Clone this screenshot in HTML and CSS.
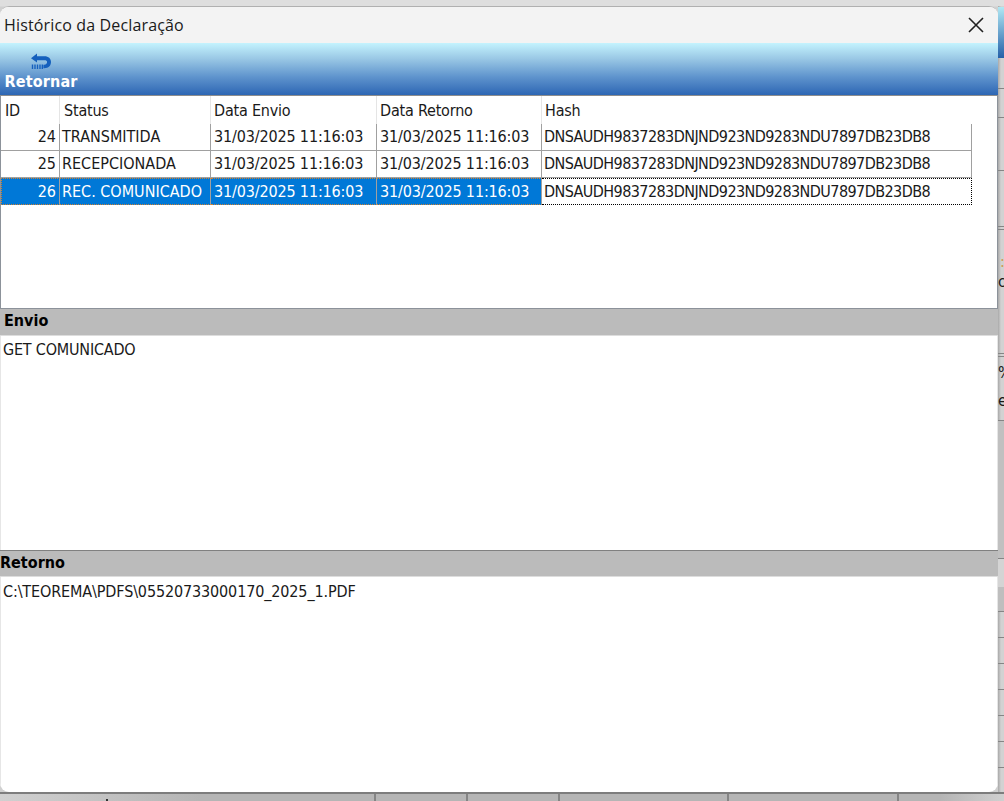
FILE: index.html
```
<!DOCTYPE html>
<html lang="pt-BR">
<head>
    <meta charset="UTF-8">
    <meta name="viewport" content="width=device-width, initial-scale=1.0">
    <title>Histórico da Declaração</title>
    <link rel="stylesheet" href="styles.css">
</head>
<body>
    <div class="desktop">
        <div class="window">
            <div class="titlebar">
                <span class="title">Histórico da Declaração</span>
                <svg class="close" width="16" height="16" viewBox="0 0 16 16">
                    <path d="M1 1L15 15M15 1L1 15" stroke="#222" stroke-width="1.6" fill="none"/>
                </svg>
            </div>

            <div class="toolbar">
                <div class="tool-button">
                    <svg width="22" height="18" viewBox="0 0 22 18">
                        <path d="M1 5.2L7 .6V3.2H14.5C18.5 3.2 21 5.4 21 9C21 12.8 18.4 15.2 14.5 15.2H13.4V11.7H14.2C16.2 11.7 17.1 10.6 17.1 9.1C17.1 7.7 16.2 7.2 14.2 7.2H7V9.6Z" fill="#1560bd"/>
                        <path d="M2.5 11.5V16M5 11.5V16M7.5 11.5V16M10 11.5V16M12.3 11.5V16" stroke="#1560bd" stroke-width="1.4"/>
                    </svg>
                    <span class="tool-label">Retornar</span>
                </div>
            </div>

            <div class="grid">
                <table>
                    <colgroup>
                        <col class="col-id"><col class="col-status"><col class="col-date"><col class="col-date-ret"><col class="col-hash">
                    </colgroup>
                    <tr>
                        <th>ID</th>
                        <th>Status</th>
                        <th>Data Envio</th>
                        <th>Data Retorno</th>
                        <th>Hash</th>
                    </tr>
                    <tr>
                        <td class="id">24</td>
                        <td>TRANSMITIDA</td>
                        <td class="date">31/03/2025 11:16:03</td>
                        <td class="date">31/03/2025 11:16:03</td>
                        <td class="hash">DNSAUDH9837283DNJND923ND9283NDU7897DB23DB8</td>
                    </tr>
                    <tr>
                        <td class="id">25</td>
                        <td>RECEPCIONADA</td>
                        <td class="date">31/03/2025 11:16:03</td>
                        <td class="date">31/03/2025 11:16:03</td>
                        <td class="hash">DNSAUDH9837283DNJND923ND9283NDU7897DB23DB8</td>
                    </tr>
                    <tr class="selected">
                        <td class="id">26</td>
                        <td>REC. COMUNICADO</td>
                        <td class="date">31/03/2025 11:16:03</td>
                        <td class="date">31/03/2025 11:16:03</td>
                        <td class="hash">DNSAUDH9837283DNJND923ND9283NDU7897DB23DB8</td>
                    </tr>
                </table>
            </div>

            <div class="section-title envio">Envio</div>
            <div class="memo memo-envio">GET COMUNICADO</div>
            <div class="section-title retorno">Retorno</div>
            <div class="memo memo-retorno">C:\TEOREMA\PDFS\05520733000170_2025_1.PDF</div>
        </div>

        <!-- parent form, visible behind the dialog -->
        <div class="behind-right">
            <div class="b-toolbar"></div>
            <div class="b-cell h31"></div>
            <div class="b-cell h29"></div>
            <div class="b-cell h53"></div>
            <div class="b-cell h56"></div>
            <div class="b-cell h3"></div>
            <div class="b-cell b-text h124"><span class="colon">:</span><span>c</span></div>
            <div class="b-cell h3"></div>
            <div class="b-cell b-values h64"><span>%</span><span>e</span></div>
            <div class="b-cell dark h138"></div>
            <div class="b-cell split h53"></div>
            <div class="b-cell h26"></div>
            <div class="b-cell h26"></div>
            <div class="b-cell h26"></div>
            <div class="b-cell h26"></div>
            <div class="b-cell h26"></div>
            <div class="b-cell h26"></div>
        </div>
        <div class="behind-bottom">
            <div class="f-cell f1"><span class="speck"></span></div>
            <div class="f-cell f2"></div>
            <div class="f-cell f2"></div>
            <div class="f-cell f3"></div>
            <div class="f-cell f4"></div>
        </div>
    </div>
</body>
</html>
```
FILE: styles.css
```
* {
    box-sizing: border-box;
}
body {
    margin: 0;
    font-family: "DejaVu Sans Condensed", "DejaVu Sans", sans-serif;
    font-stretch: condensed;
    font-size: 16px;
    color: #1a1a1a;
    overflow: hidden;
}
.desktop {
    display: grid;
    grid-template-columns: 998px 6px;
    grid-template-rows: 786px 9px;
    width: 1004px;
    height: 801px;
    padding-top: 6px;
    background: linear-gradient(#dedede 0, #dedede 6px, #d0d0d0 7px, #d0d0d0 100%);
}
.window {
    display: flex;
    flex-direction: column;
    border-top: 1px solid #b0b0b0;
    border-radius: 9px;
    background-color: #fff;
    overflow: hidden;
    white-space: nowrap;
}
.titlebar {
    display: flex;
    justify-content: space-between;
    align-items: center;
    height: 36px;
    padding: 0 14px 0 4px;
    background-color: #f3f3f3;
}
.title {
    font-family: "Open Sans", "Noto Sans", sans-serif;
    font-stretch: normal;
    font-size: 16px;
    letter-spacing: 0.15px;
}
.close {
    margin-bottom: 1px;
}
.toolbar {
    height: 52px;
    padding: 10px 4px 0;
    background: linear-gradient(#c4f3fe, #9ac8e5 30%, #5f94cd 65%, #2d66b4);
}
.tool-button {
    display: flex;
    flex-direction: column;
    align-items: center;
    width: 74px;
}
.tool-label {
    font-size: 16px;
    font-weight: bold;
    line-height: 22px;
    letter-spacing: 0.15px;
    color: #fff;
}
.grid {
    height: 214px;
    border: 1px solid #8c929a;
    border-top-color: #8d8d8d;
}
table {
    table-layout: fixed;
    width: 971px;
    border-collapse: separate;
    border-spacing: 0;
}
.col-id { width: 59px; }
.col-status { width: 151px; }
.col-date { width: 166px; }
.col-date-ret { width: 165px; }
.col-hash { width: 430px; }
th, td {
    padding: 0 0 0 2px;
    line-height: 20px;
    text-align: left;
    font-weight: normal;
    border-right: 1px solid #a0a0a0;
}
th {
    height: 28px;
    padding: 1px 0 0 4px;
    letter-spacing: -0.2px;
    border-right-color: #e5e5e5;
}
th:nth-child(n+3) {
    padding-left: 3px;
}
th:last-child {
    border-right-color: transparent;
}
td {
    height: 27px;
    border-bottom: 1px solid #a0a0a0;
}
.id {
    padding: 0 3px 0 0;
    text-align: right;
}
.date {
    padding-left: 3px;
    letter-spacing: -0.15px;
}
.hash { letter-spacing: -0.57px; }
.selected td {
    color: #fff;
    background-color: #0078d7;
    border-top: 1px dotted #d08030;
    border-bottom: 1px dotted #d08030;
}
.selected .id {
    border-left: 1px dotted #d08030;
}
.selected .hash {
    color: #1a1a1a;
    background-color: #fff;
    border: 1px dotted #000;
    border-left: 0;
}
.section-title {
    height: 27px;
    padding-left: 4px;
    line-height: 23px;
    font-weight: bold;
    color: #000;
    background-color: #bbb;
    border-bottom: 1px solid #ddd;
}
.retorno {
    padding-left: 0;
    border-top: 1px solid #808080;
}
.memo {
    height: 214px;
    padding: 5px 2px;
    line-height: 20px;
    border-left: 1px solid #e6e6e6;
    border-right: 1px solid #e6e6e6;
}
.memo-envio {
    padding-top: 4px;
    letter-spacing: -0.2px;
}
.memo-retorno { letter-spacing: -0.13px; }

.behind-right {
    display: flex;
    flex-direction: column;
    padding-top: 1px;
    overflow: hidden;
    background: linear-gradient(90deg, #a9a9a9, #d2d2d2 3px);
}
.behind-right > div {
    flex: none;
}
.b-toolbar {
    height: 51px;
    background: linear-gradient(#b0e8f4, #2560a8);
}
.b-cell {
    border-bottom: 1px solid #858585;
}
.dark {
    background-color: #c0c0c0;
}
.split {
    background: linear-gradient(#d4d4d4 28px, #bebebe 28px);
}
.h3 { height: 3px; }
.h26 { height: 26px; }
.h29 { height: 29px; }
.h31 { height: 31px; }
.h53 { height: 53px; }
.h56 { height: 56px; }
.h64 { height: 64px; }
.h124 { height: 124px; }
.h138 { height: 138px; }
.b-text, .b-values {
    display: flex;
    flex-direction: column;
    line-height: 20px;
}
.b-text { padding-top: 22px; }
.b-values { padding-top: 6px; gap: 8px; }
.colon {
    padding-left: 2px;
    color: #d09a50;
}

.behind-bottom {
    grid-column: 1 / 3;
    display: flex;
    border-top: 2px solid #7d7d7d;
    background: linear-gradient(90deg, #d0d0d0, #b5b5b5 200px, #b5b5b5 940px, #d0d0d0);
}
.f-cell {
    border-right: 2px solid #858585;
}
.f1 { width: 376px; }
.f2 { width: 92px; }
.f3 { width: 169px; }
.f4 { width: 170px; }
.speck {
    display: block;
    width: 2px;
    height: 2px;
    margin: 5px 0 0 106px;
    background-color: #333;
}
```
